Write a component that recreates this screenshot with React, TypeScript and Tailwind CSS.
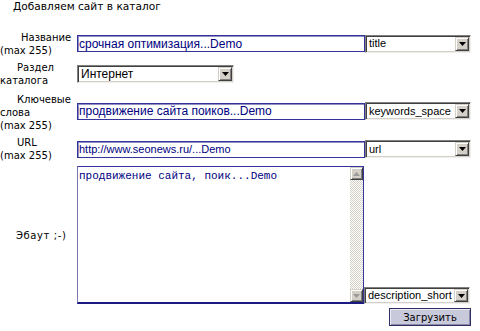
import React from 'react';

const verdana = "font-['DejaVu_Sans',Verdana,sans-serif] text-[10px] leading-[13px] text-black";
const heading = "font-['DejaVu_Sans',Verdana,sans-serif] text-[10.6px] leading-[13px] text-black";
const arial = "font-['Liberation_Sans',Arial,sans-serif] text-[11px]";
const arialRu = "font-['Liberation_Sans',Arial,sans-serif] text-[12px]";

function Arrow({ color = '#000000' }: { color?: string }) {
  return (
    <svg width="7" height="4" viewBox="0 0 7 4">
      <polygon points="0,0 7,0 3.5,4" fill={color} />
    </svg>
  );
}

function Select({ value, w, h = 'h-[18px]', ru }: { value: string; w: string; h?: string; ru?: boolean }) {
  return (
    <div
      className={`${w} ${h} flex items-stretch bg-white border border-t-[#808080] border-l-[#808080] border-b-[#f0f0f0] border-r-[#f0f0f0] shadow-[inset_1px_1px_0_#404040,inset_-1px_-1px_0_#d4d0c8] p-px`}
    >
      <div className={`flex-1 flex items-center overflow-hidden whitespace-nowrap pl-[2px] text-black ${ru ? arialRu : arial}`}>{value}</div>
      <div className="w-[14px] flex items-center justify-center bg-[#d4d0c8] border border-t-[#d4d0c8] border-l-[#d4d0c8] border-b-[#404040] border-r-[#404040] shadow-[inset_1px_1px_0_#ffffff,inset_-1px_-1px_0_#808080]">
        <Arrow />
      </div>
    </div>
  );
}

function Input({ value, ru }: { value: string; ru?: boolean }) {
  return (
    <div
      className={`w-[288px] h-[17px] flex items-center bg-white border border-[#33339a] shadow-[inset_1px_1px_0_#8f8fc4] pl-[1px] overflow-hidden whitespace-nowrap text-[#000080] ${ru ? arialRu : arial}`}
    >
      {value}
    </div>
  );
}

function ScrollBtn({ up }: { up?: boolean }) {
  return (
    <div className="h-[13px] flex items-center justify-center bg-[#d4d0c8] border border-t-[#d4d0c8] border-l-[#d4d0c8] border-b-[#404040] border-r-[#404040] shadow-[inset_1px_1px_0_#ffffff,inset_-1px_-1px_0_#808080]">
      <div className={up ? 'rotate-180' : ''}>
        <Arrow color="#9a9a9a" />
      </div>
    </div>
  );
}

export default function App() {
  return (
    <div className="w-[480px] h-[331px] bg-white relative overflow-hidden">
      <div className={`${heading} pl-[13px] h-[30px]`}>Добавляем сайт в каталог</div>

      {/* Название */}
      <div className="flex items-center h-[27px]">
        <div className={`${verdana} w-[77px] indent-[21px]`}>
          Название<br />(max 255)
        </div>
        <Input value="срочная оптимизация...Demo" ru />
        <Select value="title" w="w-[106px]" />
      </div>

      {/* Раздел */}
      <div className="flex items-center h-[34px]">
        <div className={`${verdana} w-[77px] indent-[17px]`}>
          Раздел<br />каталога
        </div>
        <Select value="Интернет" w="w-[157px]" ru />
      </div>

      {/* Ключевые слова */}
      <div className="flex items-center h-[42px]">
        <div className={`${verdana} w-[77px] indent-[17px]`}>
          Ключевые<br />слова<br />(max 255)
        </div>
        <div className="flex items-center -mt-[2px]">
          <Input value="продвижение сайта поиков...Demo" ru />
          <Select value="keywords_space" w="w-[106px]" />
        </div>
      </div>

      {/* URL */}
      <div className="flex items-center h-[32px]">
        <div className={`${verdana} w-[77px] indent-[17px]`}>
          URL<br />(max 255)
        </div>
        <Input value="http://www.seonews.ru/...Demo" />
        <Select value="url" w="w-[106px]" />
      </div>

      {/* Эбаут */}
      <div className="flex items-center h-[140px]">
        <div className={`${verdana} w-[77px] indent-[16px] tracking-[0.6px]`}>Эбаут ;-)</div>
        <div className="w-[287px] h-[138px] flex bg-white border border-[#33339a] border-l-[#7a7ab0] border-b-2 border-b-[#1a1a80]">
          <div className="flex-1 pl-[1px] pt-[3px] font-['Liberation_Mono','Courier_New',monospace] text-[11px] leading-[13px] text-[#000080] whitespace-nowrap overflow-hidden">
            продвижение сайта, поик...Demo
          </div>
          <div className="w-[13px] flex flex-col bg-[repeating-conic-gradient(#d4d0c8_0_25%,#ffffff_0_50%)] bg-[length:2px_2px]">
            <ScrollBtn up />
            <div className="flex-1" />
            <ScrollBtn />
          </div>
        </div>
        <div className="self-end mb-[1px]">
          <Select value="description_short" w="w-[106px]" h="h-[17px]" />
        </div>
      </div>

      {/* Загрузить */}
      <div className="flex justify-start pl-[389px] pt-[3px]">
        <button
          className={`w-[82px] h-[18px] bg-[#c9c9dc] border border-[#2f2f66] shadow-[inset_1px_1px_0_#ececf5,inset_-1px_-1px_0_#8a8aa8] text-[#000080] ${verdana} flex items-center justify-center`}
        >
          Загрузить
        </button>
      </div>
    </div>
  );
}
